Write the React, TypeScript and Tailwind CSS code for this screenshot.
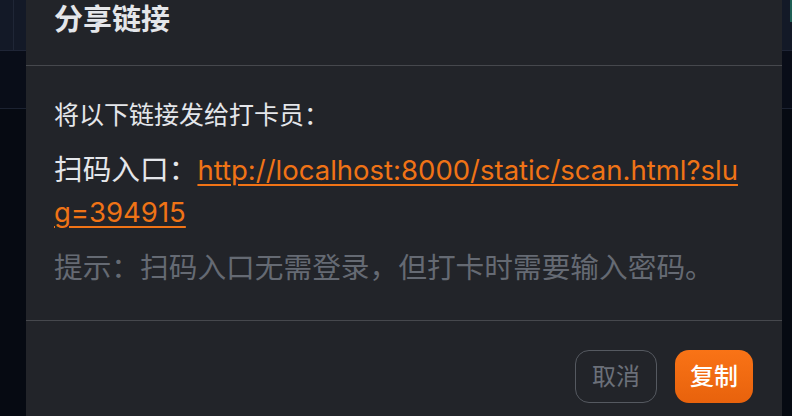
import React from 'react';

const font = { fontFamily: 'Inter, "Noto Sans CJK SC", sans-serif' };

function Backdrop() {
  return (
    <div className="flex flex-col h-full bg-[#060a12]">
      <div className="flex h-[51px] bg-[#131927] border-b border-[#1f2536]">
        <div className="w-[14px] border-r border-[#1f2636]" />
        <div className="flex-1" />
        <div className="w-[2px] h-[22px] bg-[#1f5f55]" />
      </div>
      <div className="h-[58px] bg-[#090d18] border-b border-[#1c2231]" />
      <div className="flex-1" />
    </div>
  );
}

function ShareDialog() {
  return (
    <div className="absolute left-[26px] right-[10px] top-[-16px] bg-[#222429] text-[#e4e6ea]">
      {/* Header */}
      <div className="px-[28px] pt-[18px] pb-[27px] border-b border-[#46484d]">
        <h2 className="text-[29px] leading-[36px] font-bold">分享链接</h2>
      </div>

      {/* Body */}
      <div className="pl-[28px] pr-[32px] pt-[31px] pb-[31px]">
        <p className="text-[25px] leading-[36px]">将以下链接发给打卡员：</p>
        <p className="mt-[16px] text-[28.7px] leading-[42px] break-all">
          扫码入口：
          <a href="#" className="text-[27.5px] text-[#f07316] underline underline-offset-[4px] decoration-[2px]">
            http://localhost:8000/static/scan.html?slug=394915
          </a>
        </p>
        <p className="mt-[14px] text-[28.7px] leading-[42px] text-[#656a73]">
          提示：扫码入口无需登录，但打卡时需要输入密码。
        </p>
      </div>

      {/* Footer */}
      <div className="flex justify-end gap-[18px] px-[29px] pt-[29px] pb-[40px] border-t border-[#46484d]">
        <button className="h-[53px] px-[16px] rounded-[14px] border border-[#555960] text-[24px] text-[#6b7079]">
          取消
        </button>
        <button className="h-[53px] px-[15px] rounded-[14px] bg-gradient-to-b from-[#f97316] to-[#e8620c] text-[24px] font-medium text-white">
          复制
        </button>
      </div>
    </div>
  );
}

export default function App() {
  return (
    <div className="relative w-[792px] h-[416px] overflow-hidden" style={font}>
      <Backdrop />
      <ShareDialog />
    </div>
  );
}
